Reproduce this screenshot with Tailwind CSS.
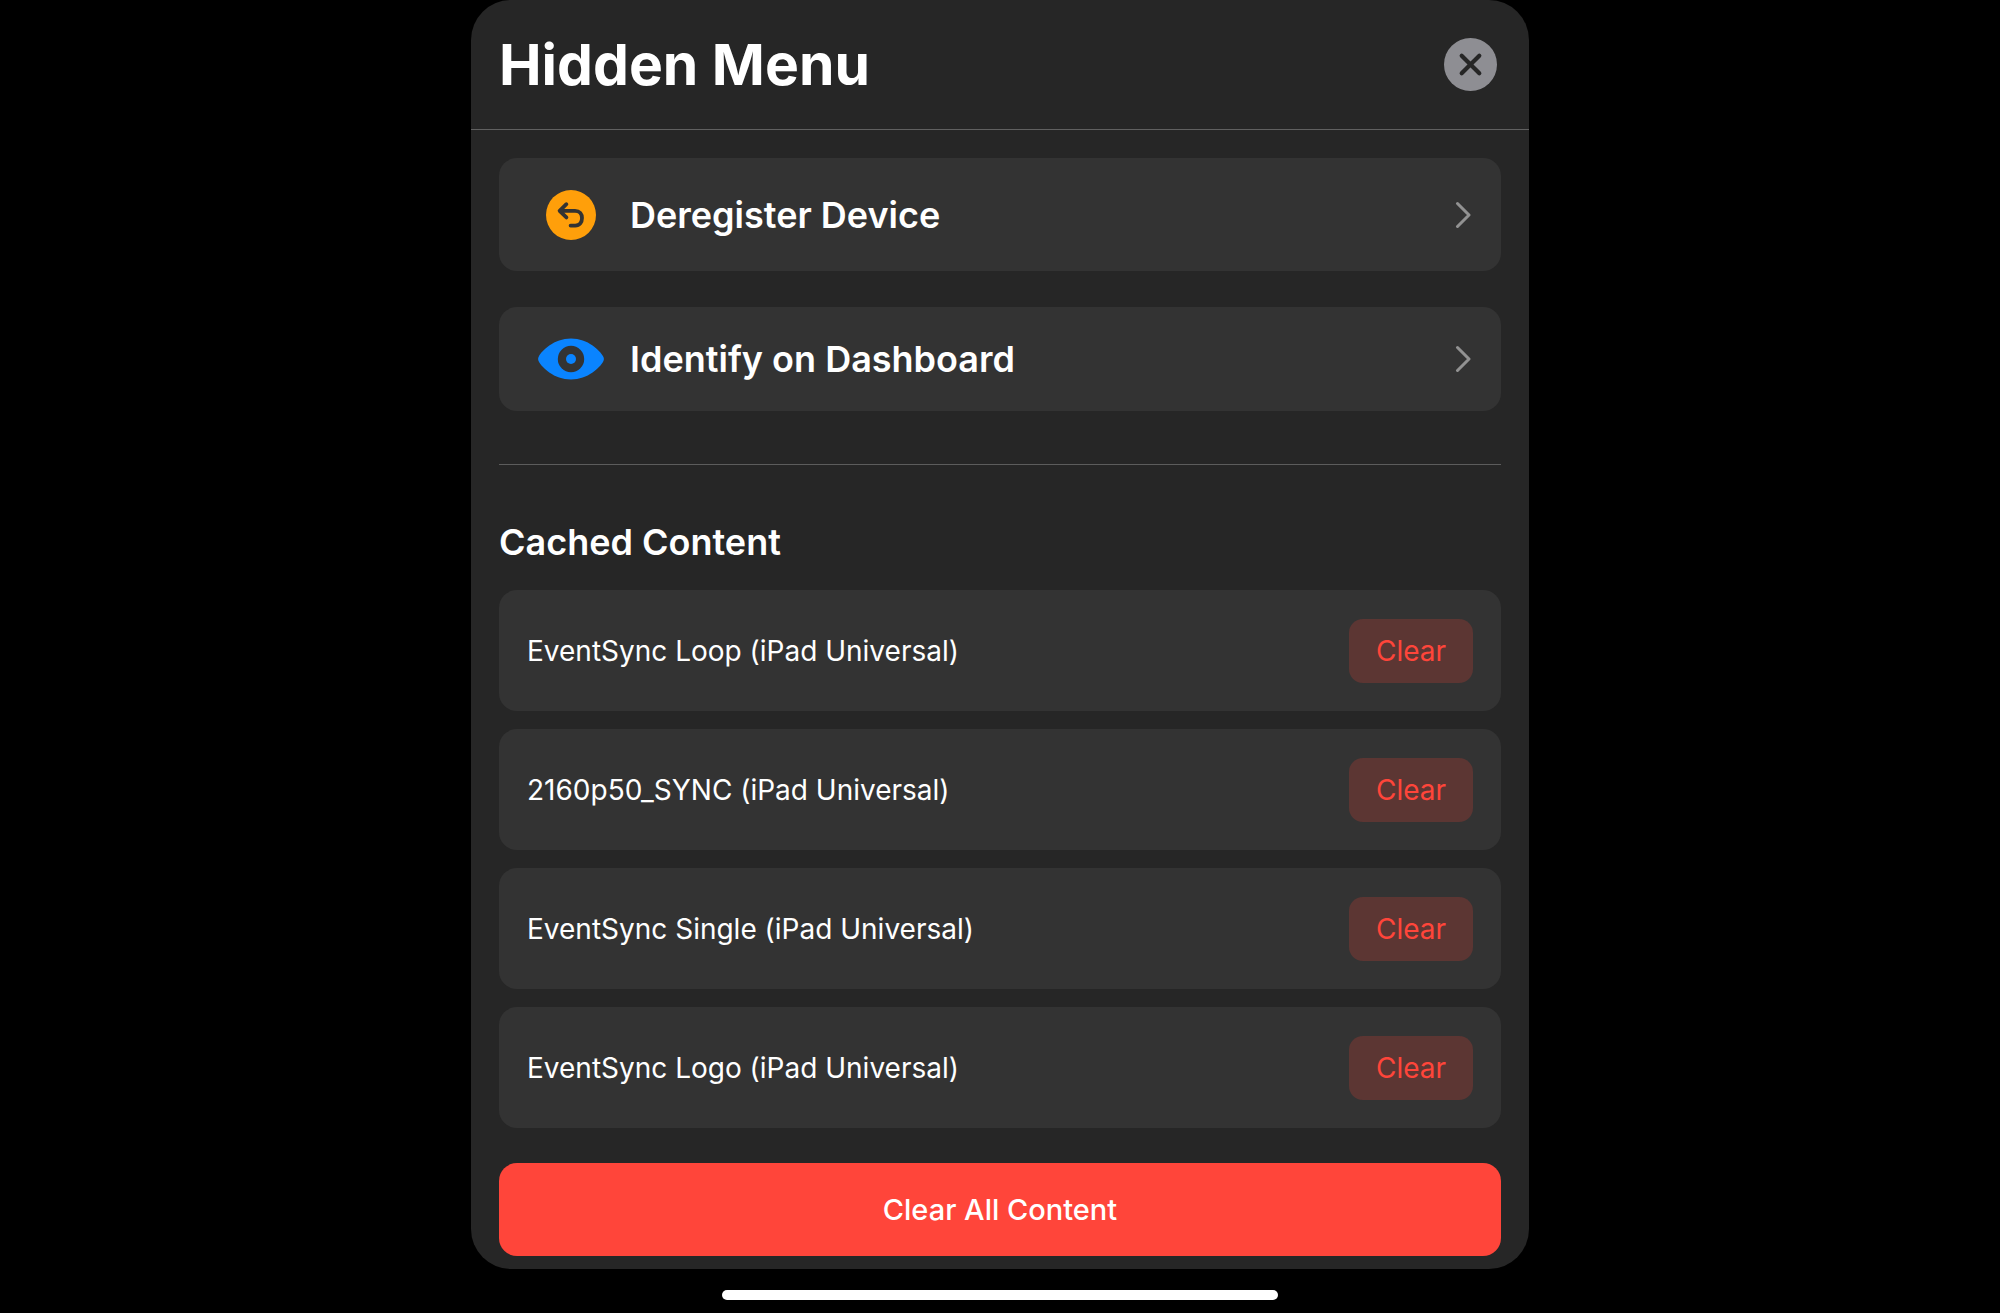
<!DOCTYPE html>
<html lang="en">
<head>
<meta charset="utf-8">
<meta name="viewport" content="width=device-width, initial-scale=1">
<title>Hidden Menu</title>
<script src="https://cdn.jsdelivr.net/npm/@tailwindcss/browser@4"></script>
</head>
<body class="flex min-h-screen flex-col items-center bg-black font-['Inter',sans-serif] text-white">
<main class="w-full max-w-[1058px] rounded-[40px] bg-[#262626] pb-[13px]">
  <header class="flex h-[130px] items-center justify-between border-b border-[#606060] pr-8 pl-7">
    <h1 class="text-[57px] leading-[70px] font-bold">Hidden Menu</h1>
    <button type="button" aria-label="Close" class="rounded-full">
      <svg class="block size-[53px]" viewBox="0 0 53 53" fill="none" aria-hidden="true">
        <circle cx="26.5" cy="26.5" r="26.5" fill="#8e8e93"/>
        <path d="M17.7 17.7 35.3 35.3M35.3 17.7 17.7 35.3" stroke="#262626" stroke-width="4.2" stroke-linecap="round"/>
      </svg>
    </button>
  </header>

  <div class="px-7 pt-7">
    <nav class="flex flex-col gap-9 border-b border-[#5c5c5c] pb-[53px]">
      <button type="button" class="flex h-[113px] w-full items-center gap-[26px] rounded-[18px] bg-[#333333] pr-[30px] pl-[39px] text-left">
        <svg class="h-[50px] w-[66px]" viewBox="0 0 66 50" fill="none" aria-hidden="true">
          <circle cx="33" cy="25" r="25" fill="#ff9f0a"/>
          <path d="M28.4 14.2 21.6 20.8 28.400 27.400M22.200 20.800H37C41.800 20.800 44 24.200 44 28 44 32 41.800 35.600 37.200 35.600H32.600" stroke="#333333" stroke-width="3.800" stroke-linecap="round" stroke-linejoin="round"/>
        </svg>
        <span class="flex-1 text-[36px] leading-[46px] font-semibold">Deregister Device</span>
        <svg class="h-7 w-4" viewBox="0 0 16 28" fill="none" aria-hidden="true"><path d="M2.500 2.500 14 14 2.500 25.500" stroke="#929292" stroke-width="3" stroke-linecap="round" stroke-linejoin="round"/></svg>
      </button>
      <button type="button" class="flex h-[104px] w-full items-center gap-[26px] rounded-[18px] bg-[#333333] pr-[30px] pl-[39px] text-left">
        <svg class="h-[50px] w-[66px]" viewBox="0 0 66 50" fill="none" aria-hidden="true">
          <path d="M33 4.500C50 4.500 62 16.500 65.200 22.500Q66.600 25 65.200 27.500C62 33.500 50 45.500 33 45.500S4 33.500 .8 27.500Q-.6 25 .8 22.500C4 16.500 16 4.500 33 4.500Z" fill="#0a84ff"/>
          <circle cx="33" cy="25" r="13.200" fill="#333333"/>
          <circle cx="33" cy="25" r="5" fill="#0a84ff"/>
        </svg>
        <span class="flex-1 text-[36px] leading-[46px] font-semibold">Identify on Dashboard</span>
        <svg class="h-7 w-4" viewBox="0 0 16 28" fill="none" aria-hidden="true"><path d="M2.500 2.500 14 14 2.500 25.500" stroke="#929292" stroke-width="3" stroke-linecap="round" stroke-linejoin="round"/></svg>
      </button>
    </nav>

    <section>
      <h2 class="pt-[54px] pb-[25px] text-[36px] leading-[46px] font-semibold">Cached Content</h2>
      <ul class="flex flex-col gap-[18px]">
        <li class="flex h-[121px] items-center justify-between rounded-[18px] bg-[#333333] px-7">
          <span class="text-[28px] leading-9">EventSync Loop (iPad Universal)</span>
          <button type="button" class="h-16 w-[124px] rounded-[14px] bg-[#5c3633] text-[28px] leading-9 text-[#ff453a]">Clear</button>
        </li>
        <li class="flex h-[121px] items-center justify-between rounded-[18px] bg-[#333333] px-7">
          <span class="text-[28px] leading-9">2160p50_SYNC (iPad Universal)</span>
          <button type="button" class="h-16 w-[124px] rounded-[14px] bg-[#5c3633] text-[28px] leading-9 text-[#ff453a]">Clear</button>
        </li>
        <li class="flex h-[121px] items-center justify-between rounded-[18px] bg-[#333333] px-7">
          <span class="text-[28px] leading-9">EventSync Single (iPad Universal)</span>
          <button type="button" class="h-16 w-[124px] rounded-[14px] bg-[#5c3633] text-[28px] leading-9 text-[#ff453a]">Clear</button>
        </li>
        <li class="flex h-[121px] items-center justify-between rounded-[18px] bg-[#333333] px-7">
          <span class="text-[28px] leading-9">EventSync Logo (iPad Universal)</span>
          <button type="button" class="h-16 w-[124px] rounded-[14px] bg-[#5c3633] text-[28px] leading-9 text-[#ff453a]">Clear</button>
        </li>
      </ul>
      <button type="button" class="mt-[35px] h-[93px] w-full rounded-[18px] bg-[#ff453a] text-[29px] leading-9 font-medium">Clear All Content</button>
    </section>
  </div>
</main>
<div class="mt-[21px] h-[10px] w-full max-w-[556px] rounded-full bg-white"></div>
</body>
</html>
